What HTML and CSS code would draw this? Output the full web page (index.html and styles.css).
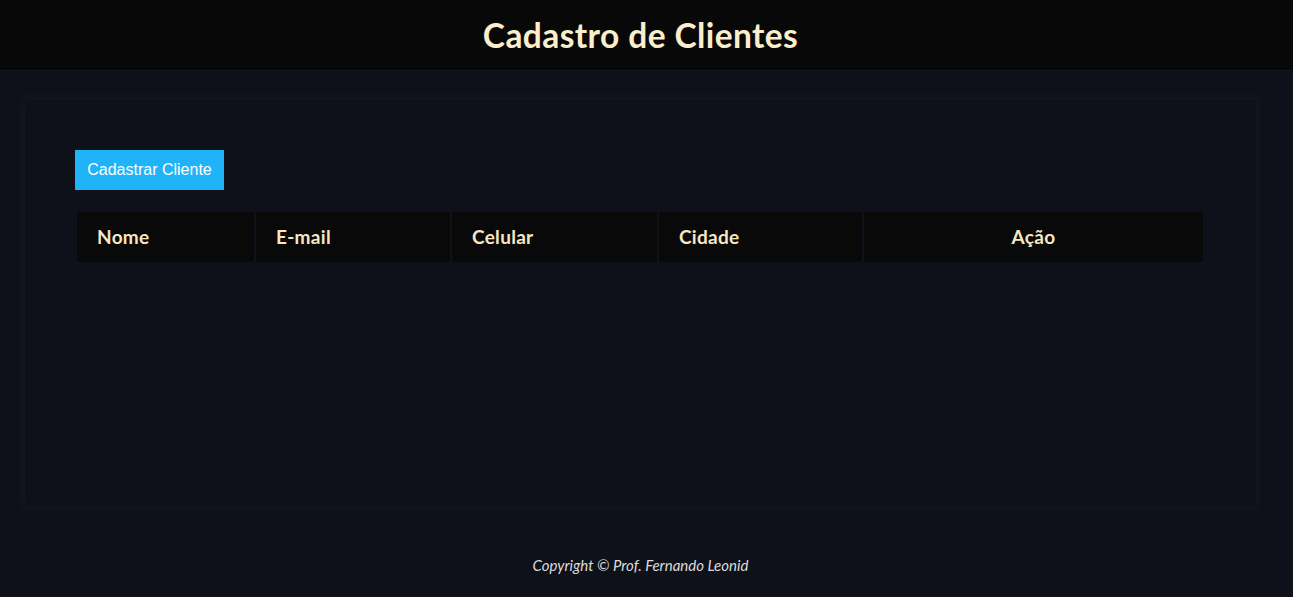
FILE: index.html
```html
<!DOCTYPE html>
<html lang="pt-BR">
<head>
<meta charset="utf-8">
<title>Cadastro de Clientes</title>
<link rel="stylesheet" href="styles.css">
</head>
<body>
<header class="topbar">
  <h1 class="title">Cadastro de Clientes</h1>
</header>
<main class="content">
  <section class="panel">
    <button class="btn-new" type="button">Cadastrar Cliente</button>
    <table class="records">
      <thead>
        <tr>
          <th class="col-nome">Nome</th>
          <th class="col-email">E-mail</th>
          <th class="col-cel">Celular</th>
          <th class="col-cid">Cidade</th>
          <th class="col-acao">Ação</th>
        </tr>
      </thead>
      <tbody></tbody>
    </table>
  </section>
</main>
<footer class="footer">Copyright © Prof. Fernando Leonid</footer>
</body>
</html>
```
FILE: styles.css
```css
* { box-sizing: border-box; }
html, body { margin: 0; padding: 0; }
body {
  background: #0e111a;
  font-family: "Lato", "Open Sans", sans-serif;
  color: #f8ebc8;
  height: 597px;
  overflow: hidden;
}
.topbar {
  height: 71px;
  background: #080808;
  border-bottom: 1px solid #141820;
  display: flex;
  align-items: center;
  justify-content: center;
  padding-right: 12px;
}
.title {
  margin: 0;
  font-size: 33.5px;
  font-weight: 700;
  color: #fbeecb;
  letter-spacing: 0.4px;
  padding-bottom: 1px;
}
.content {
  padding: 29px 37px 0 25px;
}
.panel {
  height: 406px;
  background: #0e111a;
  box-shadow: 0 0 8px 1px rgba(24, 28, 38, 0.9);
  padding: 50px 50px 0 50px;
}
.btn-new {
  display: block;
  height: 40px;
  width: 149px;
  border: none;
  background: #20b3f8;
  color: #ffffff;
  font-family: "Liberation Sans", Arial, sans-serif;
  font-size: 16px;
  padding: 0;
  margin: 0 0 20px 0;
}
.records {
  width: 1130px;
  border-collapse: separate;
  border-spacing: 2px;
}
.records th {
  height: 50px;
  background: #090909;
  box-shadow: 0 0 1px #161922;
  text-align: left;
  font-size: 19px;
  font-weight: 700;
  letter-spacing: 0.3px;
  color: #f6e7c3;
  padding: 0 0 1px 20px;
}
.records th.col-nome { width: 177px; }
.records th.col-email { width: 194px; }
.records th.col-cel { width: 205px; }
.records th.col-cid { width: 203px; }
.records th.col-acao { text-align: center; padding-left: 0; }
.footer {
  text-align: center;
  font-style: italic;
  font-size: 15px;
  color: #dcdcdc;
  margin-top: 50px;
  padding-right: 12px;
}
```
